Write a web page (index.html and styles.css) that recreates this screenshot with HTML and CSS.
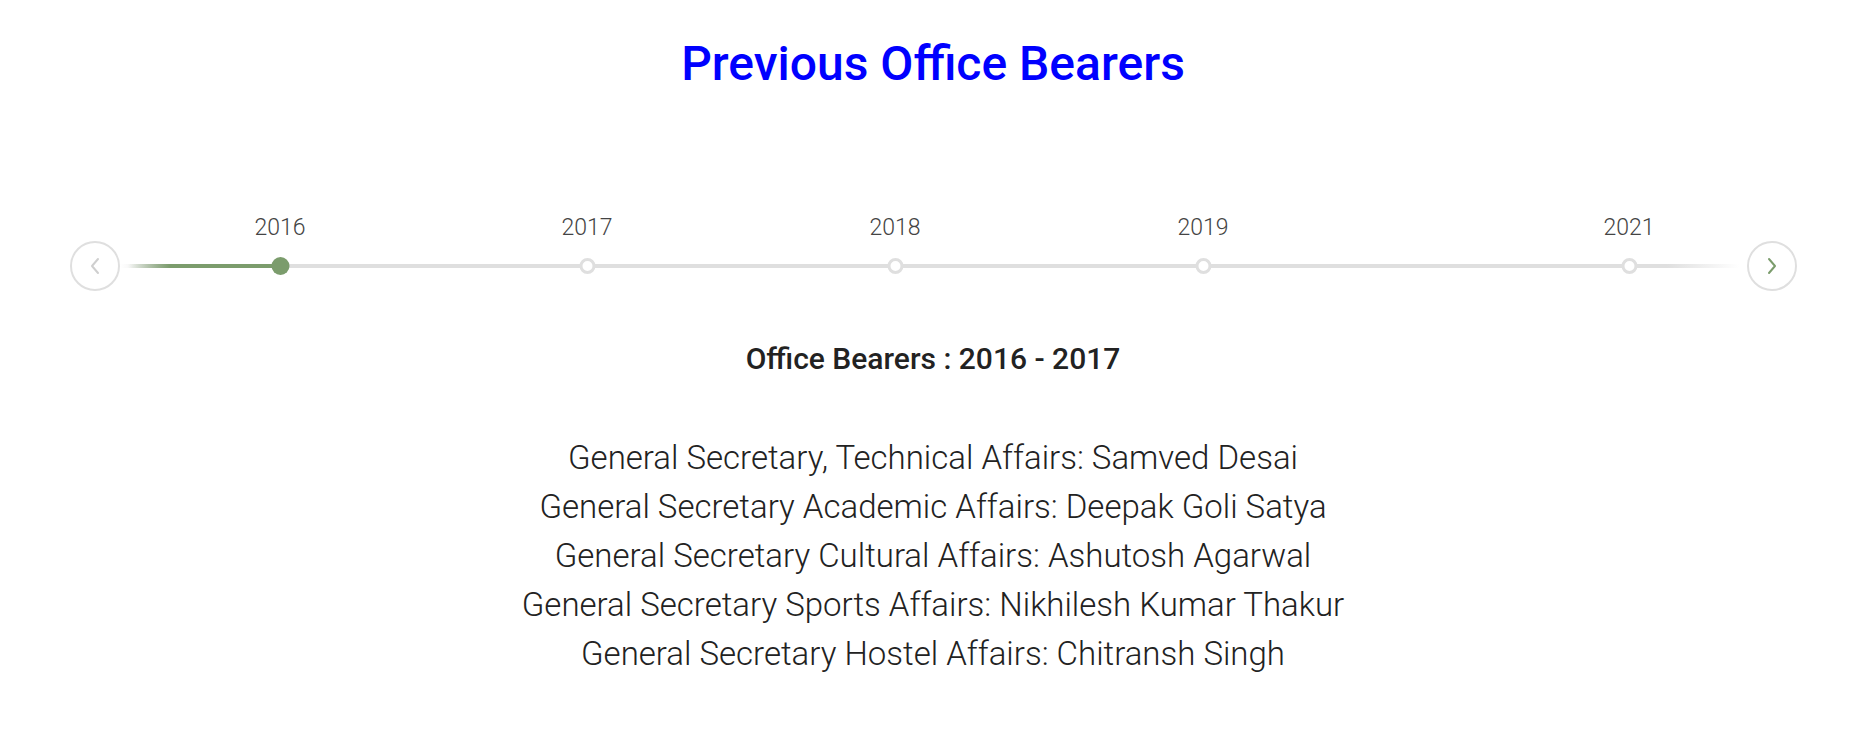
FILE: index.html
```html
<!DOCTYPE html>
<html lang="en">
<head>
  <meta charset="UTF-8" />
  <meta name="viewport" content="width=device-width, initial-scale=1" />
  <title>Previous Office Bearers</title>
  <link rel="stylesheet" href="styles.css">
</head>
<body>
  <h1 class="titulo">Previous Office Bearers</h1>

  <div class="timeline">
    <button class="nav-btn" aria-label="Previous">
      <svg width="14" height="18" viewBox="0 0 14 18"><path d="M10 2 L4 9 L10 16" fill="none" stroke="#cfcfcf" stroke-width="2" stroke-linecap="round" stroke-linejoin="round"/></svg>
    </button>

    <div class="track">
      <div class="line"></div>
      <div class="line-fill"></div>

      <div class="event active" style="left:160px"><span class="year">2016</span><span class="slot"><span class="dot"></span></span></div>
      <div class="event" style="left:467px"><span class="year">2017</span><span class="slot"><span class="dot"></span></span></div>
      <div class="event" style="left:775px"><span class="year">2018</span><span class="slot"><span class="dot"></span></span></div>
      <div class="event" style="left:1083px"><span class="year">2019</span><span class="slot"><span class="dot"></span></span></div>
      <div class="event" style="left:1509px"><span class="year">2021</span><span class="slot"><span class="dot"></span></span></div>
    </div>

    <button class="nav-btn" aria-label="Next">
      <svg width="14" height="18" viewBox="0 0 14 18"><path d="M4 2 L10 9 L4 16" fill="none" stroke="#7b9c6c" stroke-width="2" stroke-linecap="round" stroke-linejoin="round"/></svg>
    </button>
  </div>

  <div class="contenido">
    <h2 class="subtitulo">Office Bearers : 2016 - 2017</h2>
    <ul class="lista">
      <li>General Secretary, Technical Affairs: Samved Desai</li>
      <li>General Secretary Academic Affairs: Deepak Goli Satya</li>
      <li>General Secretary Cultural Affairs: Ashutosh Agarwal</li>
      <li>General Secretary Sports Affairs: Nikhilesh Kumar Thakur</li>
      <li>General Secretary Hostel Affairs: Chitransh Singh</li>
    </ul>
  </div>
</body>
</html>
```

FILE: styles.css
```css
body {
  font-family: Roboto, "Liberation Sans", sans-serif;
  background-color: #ffffff;
  color: #222;
  margin: 0;
}
.titulo {
  color: #0000ff;
  font-size: 48px;
  font-weight: 500;
  line-height: 1.2;
  text-align: center;
  margin: 35px 0 0;
  padding-left: 17px;
}
.timeline {
  display: flex;
  align-items: center;
  height: 50px;
  margin-top: 148px;
  padding: 0 52px 0 70px;
}
.nav-btn {
  width: 50px;
  height: 50px;
  flex: 0 0 50px;
  border: 2px solid #dfdfdf;
  border-radius: 50%;
  background: #fff;
  display: flex;
  align-items: center;
  justify-content: center;
  padding: 0;
  cursor: pointer;
}
.track {
  position: relative;
  flex: 1;
  height: 50px;
}
.line {
  position: absolute;
  left: 0;
  right: 0;
  top: 23px;
  height: 4px;
  background: linear-gradient(to right, rgba(223,223,223,0) 0, #dfdfdf 40px, #dfdfdf calc(100% - 80px), rgba(223,223,223,0) calc(100% - 8px));
}
.line-fill {
  position: absolute;
  left: 0;
  width: 160px;
  top: 23px;
  height: 4px;
  background: linear-gradient(to right, rgba(123,156,108,0) 8px, #7b9c6c 50px);
}
.event {
  position: absolute;
  top: -26px;
  transform: translateX(-50%);
  display: flex;
  flex-direction: column;
  align-items: center;
}
.year {
  font-size: 23px;
  font-weight: 300;
  line-height: 26px;
  color: #444;
}
.slot {
  height: 20px;
  margin-top: 15px;
  display: flex;
  align-items: center;
  justify-content: center;
}
.dot {
  width: 16px;
  height: 16px;
  box-sizing: border-box;
  border-radius: 50%;
  border: 3px solid #dfdfdf;
  background: #fff;
}
.event.active .dot {
  width: 18px;
  height: 18px;
  border: none;
  background: #7b9c6c;
}
.contenido {
  text-align: center;
  padding-left: 17px;
}
.subtitulo {
  font-size: 30px;
  font-weight: 500;
  line-height: 34px;
  color: #222;
  margin: 51px 0 0;
}
.lista {
  list-style: none;
  padding: 0;
  margin: 57px 0 0;
  font-size: 33px;
  font-weight: 300;
  line-height: 49px;
  color: #222;
}
```
